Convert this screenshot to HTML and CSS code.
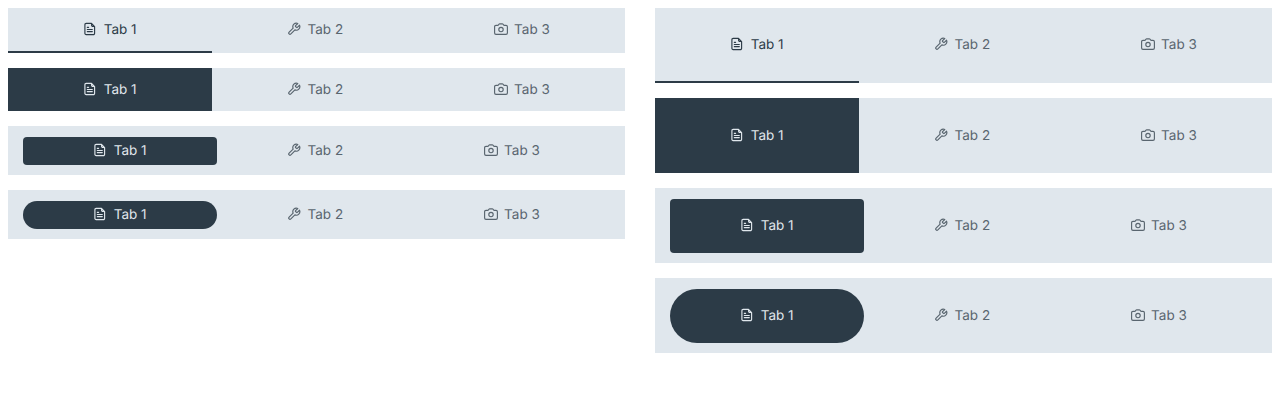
FILE: index.html
```
<!DOCTYPE html>
<html lang="en">
<head>
<meta charset="utf-8">
<title>Tabs</title>
<link rel="stylesheet" href="styles.css">
</head>
<body>
<svg class="sprite" aria-hidden="true">
  <symbol id="file" viewBox="0 0 14 14"><path d="M8.5 1.4H3.2A1.3 1.3 0 0 0 1.9 2.7v8.5a1.3 1.3 0 0 0 1.3 1.4h7a1.3 1.3 0 0 0 1.4-1.4V4.6zM8.6 1.8v1.4a1.2 1.2 0 0 0 1.2 1.2h1.4M4.3 5.3h1.3M4.3 7.5h5M4.3 9.6h5"/></symbol>
  <symbol id="wrench" viewBox="0 0 24 24"><path d="M14.7 6.3a1 1 0 0 0 0 1.4l1.6 1.6a1 1 0 0 0 1.4 0l3.77-3.77a6 6 0 0 1-7.94 7.94l-6.91 6.91a2.12 2.12 0 0 1-3-3l6.91-6.91a6 6 0 0 1 7.94-7.94l-3.76 3.76z"/></symbol>
  <symbol id="camera" viewBox="0 0 14 14"><path d="M2 3.4h1.6c.4 0 .7-.2.9-.5l.4-.6c.2-.3.5-.5.8-.5h2.6c.3 0 .6.2.8.5l.4.6c.2.3.5.5.9.5H12c.8 0 1.4.5 1.4 1.3v6.2c0 .8-.6 1.4-1.4 1.4H2c-.8 0-1.4-.6-1.4-1.4V4.7c0-.8.6-1.3 1.4-1.3z"/><circle cx="7" cy="7.5" r="2.2"/></symbol>
</svg>
<main class="demo">
  <section class="column">
    <nav class="tabs underline"><a class="tab active"><svg class="icon"><use href="#file"/></svg>Tab 1</a><a class="tab"><svg class="icon"><use href="#wrench" class="wrench"/></svg>Tab 2</a><a class="tab"><svg class="icon"><use href="#camera"/></svg>Tab 3</a></nav>
    <nav class="tabs fill"><a class="tab active"><svg class="icon"><use href="#file"/></svg>Tab 1</a><a class="tab"><svg class="icon"><use href="#wrench" class="wrench"/></svg>Tab 2</a><a class="tab"><svg class="icon"><use href="#camera"/></svg>Tab 3</a></nav>
    <nav class="tabs inset"><a class="tab active"><svg class="icon"><use href="#file"/></svg>Tab 1</a><a class="tab"><svg class="icon"><use href="#wrench" class="wrench"/></svg>Tab 2</a><a class="tab"><svg class="icon"><use href="#camera"/></svg>Tab 3</a></nav>
    <nav class="tabs inset pill"><a class="tab active"><svg class="icon"><use href="#file"/></svg>Tab 1</a><a class="tab"><svg class="icon"><use href="#wrench" class="wrench"/></svg>Tab 2</a><a class="tab"><svg class="icon"><use href="#camera"/></svg>Tab 3</a></nav>
  </section>
  <section class="column tall">
    <nav class="tabs underline"><a class="tab active"><svg class="icon"><use href="#file"/></svg>Tab 1</a><a class="tab"><svg class="icon"><use href="#wrench" class="wrench"/></svg>Tab 2</a><a class="tab"><svg class="icon"><use href="#camera"/></svg>Tab 3</a></nav>
    <nav class="tabs fill"><a class="tab active"><svg class="icon"><use href="#file"/></svg>Tab 1</a><a class="tab"><svg class="icon"><use href="#wrench" class="wrench"/></svg>Tab 2</a><a class="tab"><svg class="icon"><use href="#camera"/></svg>Tab 3</a></nav>
    <nav class="tabs inset"><a class="tab active"><svg class="icon"><use href="#file"/></svg>Tab 1</a><a class="tab"><svg class="icon"><use href="#wrench" class="wrench"/></svg>Tab 2</a><a class="tab"><svg class="icon"><use href="#camera"/></svg>Tab 3</a></nav>
    <nav class="tabs inset pill"><a class="tab active"><svg class="icon"><use href="#file"/></svg>Tab 1</a><a class="tab"><svg class="icon"><use href="#wrench" class="wrench"/></svg>Tab 2</a><a class="tab"><svg class="icon"><use href="#camera"/></svg>Tab 3</a></nav>
  </section>
</main>
</body>
</html>
```
FILE: styles.css
```
* { box-sizing: border-box; }
body {
  margin: 8px;
  background: #fff;
  font: 13.5px/22px Inter, sans-serif;
  text-rendering: geometricPrecision;
}
.sprite { display: none; }
.demo {
  display: grid;
  grid-template-columns: 1fr 1fr;
  gap: 30px;
}
.column {
  display: flex;
  flex-direction: column;
  gap: 15px;
}
.tabs {
  display: flex;
  height: 43px;
  background: #e0e7ed;
}
.tab {
  flex: 1 1 auto;
  display: flex;
  align-items: center;
  justify-content: center;
  gap: 6.5px;
  color: #59656f;
}
.icon {
  width: 14px;
  height: 14px;
  margin-bottom: 1px;
  fill: none;
  stroke: currentColor;
  stroke-width: 1.15;
  stroke-linecap: round;
  stroke-linejoin: round;
}
.wrench { stroke-width: 2; }
.active { color: #2c3b47; }
.underline { height: 45px; }
.underline .tab { border-bottom: 2px solid transparent; }
.underline .active { border-color: #2c3b47; }
.fill .active,
.inset .active {
  background: #2c3b47;
  color: #e0e7ed;
}
.inset {
  height: 49px;
  padding: 11px 15px 10px;
}
.inset .tab { border-radius: 4px; padding-bottom: 1px; }
.pill .tab { border-radius: 30px; }
.tall .tabs { height: 75px; }
```
